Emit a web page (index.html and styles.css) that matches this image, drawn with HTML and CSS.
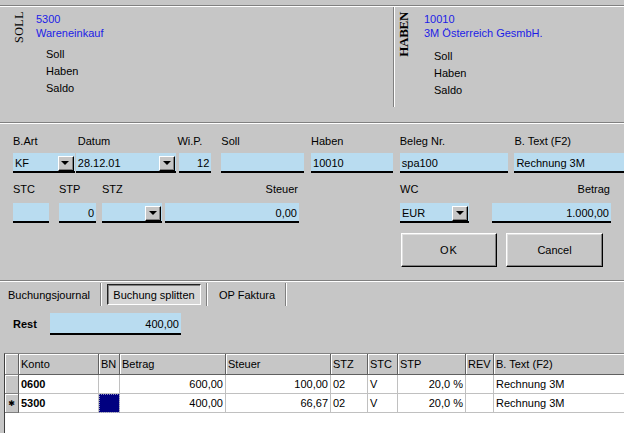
FILE: index.html
```html
<!DOCTYPE html>
<html>
<head>
<meta charset="utf-8">
<link rel="stylesheet" href="styles.css">
</head>
<body>
<div class="page">
  <div class="sep"></div>
  <div class="acct">
    <div class="acct-side acct-left">
      <div class="vlabel vsoll">SOLL</div>
      <div class="info">
        <div class="blue">5300</div>
        <div class="blue">Wareneinkauf</div>
        <div class="sums">
          <div>Soll</div>
          <div>Haben</div>
          <div>Saldo</div>
        </div>
      </div>
    </div>
    <div class="acct-side acct-right">
      <div class="vlabel vhaben">HABEN</div>
      <div class="info info-r">
        <div class="blue">10010</div>
        <div class="blue">3M Österreich GesmbH.</div>
        <div class="sums">
          <div>Soll</div>
          <div>Haben</div>
          <div>Saldo</div>
        </div>
      </div>
    </div>
  </div>
  <div class="sep sep2"></div>

  <div class="row row1">
    <div class="field f-bart"><div class="lbl">B.Art</div><div class="inp combo"><span>KF</span><span class="dd"><i></i></span></div></div>
    <div class="field f-datum"><div class="lbl lbl-in">Datum</div><div class="inp combo"><span>28.12.01</span><span class="dd"><i></i></span></div></div>
    <div class="field f-wip"><div class="lbl">Wi.P.</div><div class="inp right">12</div></div>
    <div class="field f-soll"><div class="lbl">Soll</div><div class="inp"></div></div>
    <div class="field f-haben"><div class="lbl">Haben</div><div class="inp">10010</div></div>
    <div class="field f-beleg"><div class="lbl">Beleg Nr.</div><div class="inp">spa100</div></div>
    <div class="field f-btext"><div class="lbl">B. Text (F2)</div><div class="inp">Rechnung 3M</div></div>
  </div>

  <div class="row row2">
    <div class="field f-stc"><div class="lbl">STC</div><div class="inp"></div></div>
    <div class="field f-stp"><div class="lbl">STP</div><div class="inp right">0</div></div>
    <div class="field f-stz"><div class="lbl">STZ</div><div class="inp combo"><span></span><span class="dd"><i></i></span></div></div>
    <div class="field f-steuer"><div class="lbl right">Steuer</div><div class="inp right">0,00</div></div>
    <div class="field f-wc"><div class="lbl">WC</div><div class="inp combo"><span>EUR</span><span class="dd"><i></i></span></div></div>
    <div class="field f-betrag"><div class="lbl right">Betrag</div><div class="inp right">1.000,00</div></div>
  </div>

  <div class="btnrow">
    <div class="btn btn-ok">OK</div>
    <div class="btn btn-cancel">Cancel</div>
  </div>

  <div class="sep sep3"></div>

  <div class="tabs">
    <div class="tab tab1">Buchungsjournal</div>
    <div class="tab tab-active">Buchung splitten</div>
    <div class="tsep"></div>
    <div class="tab tab3">OP Faktura</div>
  </div>

  <div class="rest">
    <div class="rest-lbl">Rest</div>
    <div class="inp right rest-inp">400,00</div>
  </div>

  <div class="grid">
    <table>
      <colgroup>
        <col class="c-ind"><col class="c-konto"><col class="c-bn"><col class="c-betrag"><col class="c-steuer"><col class="c-stz"><col class="c-stc"><col class="c-stp"><col class="c-rev"><col class="c-btext">
      </colgroup>
      <thead>
        <tr>
          <th class="ind"></th><th>Konto</th><th>BN</th><th>Betrag</th><th>Steuer</th><th>STZ</th><th>STC</th><th>STP</th><th>REV</th><th>B. Text (F2)</th>
        </tr>
      </thead>
      <tbody>
        <tr>
          <td class="ind"></td><td class="b">0600</td><td></td><td class="r">600,00</td><td class="r">100,00</td><td>02</td><td>V</td><td class="r">20,0 %</td><td></td><td>Rechnung 3M</td>
        </tr>
        <tr>
          <td class="ind star">✱</td><td class="b">5300</td><td class="sel"></td><td class="r">400,00</td><td class="r">66,67</td><td>02</td><td>V</td><td class="r">20,0 %</td><td></td><td>Rechnung 3M</td>
        </tr>
      </tbody>
    </table>
  </div>
</div>
</body>
</html>
```
FILE: styles.css
```css
html, body {
  margin: 0;
  padding: 0;
}
body {
  background: #c6c6c6;
  font-family: "Liberation Sans", Arial, sans-serif;
  font-size: 11px;
  color: #000;
}
.page {
  width: 624px;
  height: 433px;
  overflow: hidden;
  padding-top: 5px;
  box-sizing: border-box;
}
.sep {
  height: 0;
  border-top: 1px solid #808080;
  border-bottom: 1px solid #fff;
}
.sep2 { margin-top: 15px; }
.sep3 { margin-top: 13px; }

/* account header */
.acct {
  display: flex;
  height: 100px;
}
.acct-side {
  display: flex;
  align-items: flex-start;
  padding-top: 4px;
  box-sizing: border-box;
}
.acct-left {
  width: 394px;
  padding-left: 14px;
  border-right: 1px solid #808080;
  box-shadow: 1px 0 0 #fff;
}
.acct-right {
  flex: 1;
  padding-left: 4px;
}
.vlabel {
  writing-mode: vertical-rl;
  transform: rotate(180deg);
  font-family: "Liberation Serif", "Times New Roman", serif;
  line-height: 10px;
  color: #000;
}
.vsoll { font-size: 12px; letter-spacing: 0.5px; }
.vhaben { font-size: 13px; margin-top: 1px; line-height: 12px; font-weight: bold; letter-spacing: -0.3px; }
.info {
  margin-left: 12px;
  margin-top: 1px;
  line-height: 14px;
}
.info-r { margin-left: 14px; margin-top: 1px; }
.blue { color: #1c1ce6; }
.sums {
  margin-top: 6px;
  margin-left: 10px;
  line-height: 17px;
}
.info-r .sums { margin-top: 8px; }

/* form rows */
.row {
  display: flex;
  padding-left: 13px;
}
.row1 { margin-top: 11px; }
.row2 { margin-top: 10px; }
.field {
  display: flex;
  flex-direction: column;
}
.lbl {
  line-height: 13px;
  height: 13px;
  white-space: nowrap;
}
.lbl.right { text-align: right; padding-right: 1px; }
.lbl-in { padding-left: 2px; }
.row1 .inp { margin-top: 5px; }
.row2 .inp { margin-top: 7px; }
.inp {
  background: #b9dcf0;
  border-bottom: 2px solid #000;
  height: 16px;
  padding: 2px 2px 0 2px;
  line-height: 16px;
  display: flex;
  align-items: center;
  white-space: nowrap;
  overflow: hidden;
}
.inp.right { justify-content: flex-end; }
.combo { justify-content: space-between; padding-right: 1px; }
.dd {
  width: 14px;
  height: 13px;
  background: #c6c6c6;
  border-style: solid;
  border-width: 1px;
  border-color: #fff #000 #000 #fff;
  box-shadow: inset -1px -1px 0 #808080;
  display: flex;
  align-items: center;
  justify-content: center;
  flex: none;
}
.dd i {
  display: block;
  width: 0;
  height: 0;
  border-left: 4px solid transparent;
  border-right: 4px solid transparent;
  border-top: 4px solid #000;
  margin-left: -1px;
}

.f-bart { width: 62px; }
.f-datum { width: 101px; margin-left: 1px; }
.f-wip { width: 32px; margin-left: 3px; }
.f-wip .lbl { margin-left: -2px; }
.f-soll { width: 83px; margin-left: 10px; }
.f-haben { width: 82px; margin-left: 7px; }
.f-beleg { width: 109px; margin-left: 7px; }
.f-btext { width: 110px; margin-left: 6px; }

.f-stc { width: 36px; }
.f-stp { width: 37px; margin-left: 10px; }
.f-stz { width: 60px; margin-left: 6px; }
.f-steuer { width: 134px; margin-left: 3px; }
.f-wc { width: 69px; margin-left: 101px; }
.f-betrag { width: 119px; margin-left: 23px; }

/* buttons */
.btnrow {
  display: flex;
  padding-left: 401px;
  margin-top: 10px;
  gap: 9px;
}
.btn {
  height: 32px;
  border-style: solid;
  border-width: 1px;
  border-color: #fff #000 #000 #fff;
  box-shadow: inset -1px -1px 0 #808080, inset 1px 1px 0 #dfdfdf;
  display: flex;
  align-items: center;
  justify-content: center;
  box-sizing: content-box;
}
.btn-ok { width: 94px; letter-spacing: 1px; }
.btn-cancel { width: 95px; }

/* tabs */
.tabs {
  display: flex;
  height: 24px;
  align-items: stretch;
}
.tab {
  display: flex;
  align-items: center;
  white-space: nowrap;
}
.tab1 {
  width: 101px;
  padding-left: 8px;
  box-sizing: border-box;
  border-right: 1px solid #808080;
  box-shadow: 1px 0 0 #fff;
  margin: 1px 0 0 0;
}
.tab-active {
  margin: 2px 0 1px 6px;
  width: 94px;
  box-sizing: border-box;
  justify-content: center;
  background: #d6d6d6;
  border-style: solid;
  border-width: 1px;
  border-color: #202020 #fff #fff #202020;
  box-shadow: inset 1px 1px 0 #808080;
}
.tsep {
  margin: 1px 0 0 5px;
  width: 1px;
  background: #808080;
  box-shadow: 1px 0 0 #fff;
}
.tab3 {
  width: 79px;
  padding-left: 12px;
  box-sizing: border-box;
  border-right: 1px solid #808080;
  box-shadow: 1px 0 0 #fff;
  margin-top: 1px;
}

/* rest */
.rest {
  display: flex;
  align-items: center;
  padding-left: 13px;
  margin-top: 7px;
}
.rest-lbl {
  font-weight: bold;
  width: 37px;
}
.rest-inp {
  width: 127px;
  height: 18px;
  line-height: 18px;
}

/* grid */
.grid {
  margin-top: 18px;
  margin-left: 4px;
  border-top: 1px solid #808080;
  border-left: 1px solid #404040;
  background: #fff;
  height: 100px;
}
table {
  border-collapse: separate;
  border-spacing: 0;
  table-layout: fixed;
  width: 625px;
}
.c-ind { width: 14px; }
.c-konto { width: 80px; }
.c-bn { width: 21px; }
.c-betrag { width: 106px; }
.c-steuer { width: 105px; }
.c-stz { width: 37px; }
.c-stc { width: 30px; }
.c-stp { width: 68px; }
.c-rev { width: 28px; }
.c-btext { width: 136px; }

th {
  background: #c6c6c6;
  font-weight: normal;
  text-align: left;
  height: 20px;
  padding: 0 0 0 2px;
  border-right: 1px solid #606060;
  border-bottom: 1px solid #606060;
  box-shadow: inset 1px 1px 0 #fff;
  white-space: nowrap;
  overflow: hidden;
}
td {
  height: 18px;
  padding: 0 2px;
  border-right: 1px solid #c0c0c0;
  border-bottom: 1px solid #c0c0c0;
  white-space: nowrap;
  overflow: hidden;
}
td.ind, th.ind {
  background: #c6c6c6;
  border-right: 1px solid #606060;
  border-bottom: 1px solid #808080;
  box-shadow: inset 1px 1px 0 #fff;
  padding: 0;
}
td.star {
  text-align: center;
  font-family: "DejaVu Sans", sans-serif;
  font-size: 8px;
}
td.b { font-weight: bold; }
td.r { text-align: right; padding-right: 2px; }
td.sel {
  background: #000080;
  outline: 1px dotted #9090c0;
  outline-offset: -1px;
}
```
